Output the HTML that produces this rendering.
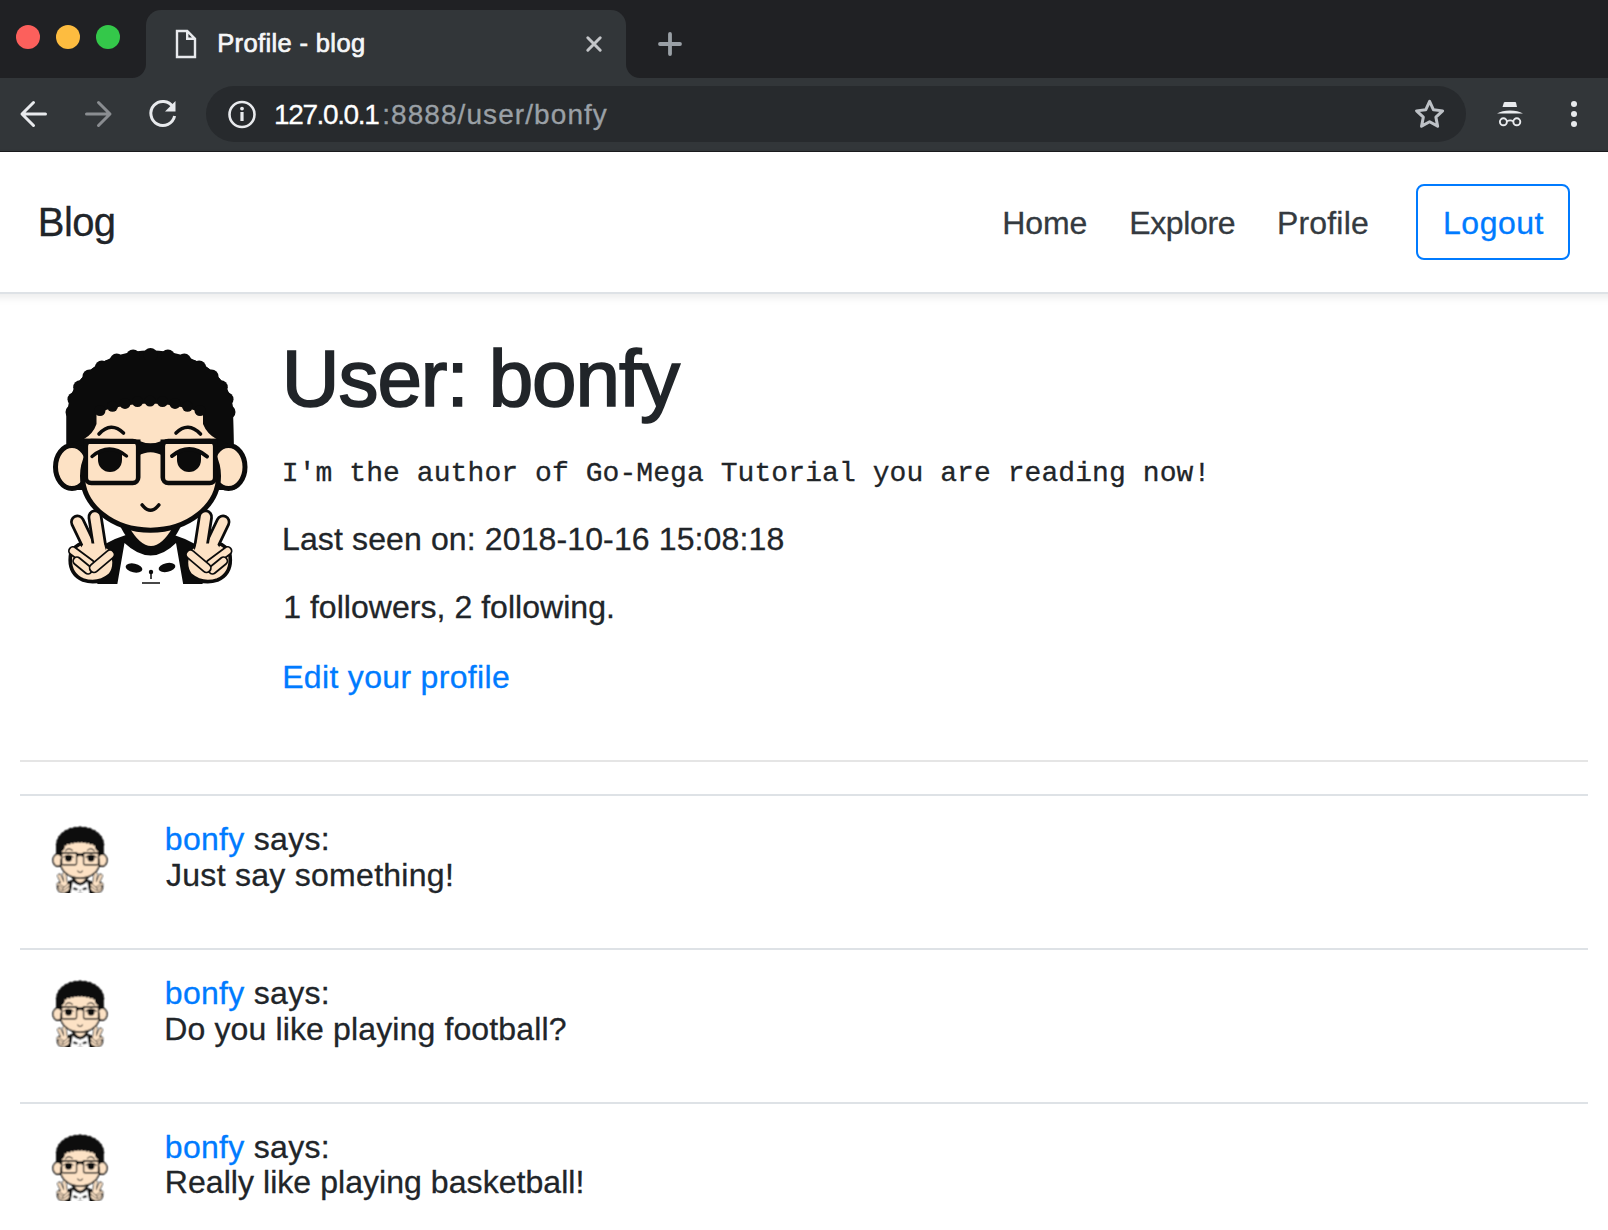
<!DOCTYPE html>
<html><head><meta charset="utf-8"><title>Profile - blog</title>
<style>
html,body{margin:0;padding:0;}
body{width:1608px;height:1230px;overflow:hidden;position:relative;background:#fff;font-family:"Liberation Sans",sans-serif;color:#212529;}
.a{position:absolute;}
.t{position:absolute;white-space:nowrap;line-height:1;-webkit-text-stroke:0.3px currentColor;}
#strip{left:0;top:0;width:1608px;height:78px;background:#202124;}
#toolbar{left:0;top:78px;width:1608px;height:73px;background:#323639;}
#tbline{left:0;top:151px;width:1608px;height:1px;background:#1a1b1d;}
#tab{left:146px;top:10px;width:480px;height:68px;background:#323639;border-radius:15px 15px 0 0;}
.dot{width:24px;height:24px;border-radius:50%;top:25px;}
#omni{left:206px;top:86px;width:1260px;height:56px;background:#272a2d;border-radius:28px;}
#nav{left:-30px;top:152px;width:1668px;height:140px;background:#fff;border-bottom:2px solid #dee2e6;box-shadow:0 4px 8px rgba(0,0,0,.075);}
.hr{left:20px;width:1568px;height:2px;}
</style></head>
<body>
<!-- Chrome -->
<div id="strip" class="a"></div>
<div id="toolbar" class="a"></div>
<div id="tbline" class="a"></div>
<div id="tab" class="a"></div>
<!-- tab flares -->
<svg class="a" style="left:132px;top:64px" width="14" height="14"><path d="M0 14 A14 14 0 0 0 14 0 L14 14 Z" fill="#323639"/></svg>
<svg class="a" style="left:626px;top:64px" width="14" height="14"><path d="M14 14 A14 14 0 0 1 0 0 L0 14 Z" fill="#323639"/></svg>
<div class="a dot" style="left:16px;background:#fc605c;"></div>
<div class="a dot" style="left:56px;background:#fdbc40;"></div>
<div class="a dot" style="left:96px;background:#34c84a;"></div>
<!-- page icon -->
<svg class="a" style="left:174px;top:28px" width="24" height="32"><path d="M3 3 H13.2 L21 10.8 V29 H3 Z M13.2 3 V10.8 H21" fill="none" stroke="#e8eaed" stroke-width="2.4" stroke-linejoin="miter"/></svg>
<div id="tabt" class="t" style="left:217.20px;top:31.00px;font-size:25.5px;color:#f5f6f7;-webkit-text-stroke:0.7px #f5f6f7;letter-spacing:0.369px;">Profile - blog</div>
<svg class="a" style="left:582px;top:32px" width="24" height="24"><path d="M5.8 5.8 L18.2 18.2 M18.2 5.8 L5.8 18.2" stroke="#c4c6c9" stroke-width="3" stroke-linecap="round"/></svg>
<svg class="a" style="left:654px;top:28px" width="32" height="32"><path d="M16 6 V26 M6 16 H26" stroke="#9aa0a6" stroke-width="3.8" stroke-linecap="round"/></svg>
<!-- toolbar icons -->
<svg class="a" style="left:18px;top:98px" width="32" height="32"><path d="M27.5 16 H4.5 M15.5 4.5 L4 16 L15.5 27.5" fill="none" stroke="#e8eaed" stroke-width="3" stroke-linecap="round" stroke-linejoin="round"/></svg>
<svg class="a" style="left:82px;top:98px" width="32" height="32"><path d="M4.5 16 H27.5 M16.5 4.5 L28 16 L16.5 27.5" fill="none" stroke="#8a8d91" stroke-width="3" stroke-linecap="round" stroke-linejoin="round"/></svg>
<svg class="a" style="left:146px;top:97px" width="34" height="34"><path d="M27 10 A12 12 0 1 0 28.6 19" fill="none" stroke="#e8eaed" stroke-width="3"/><path d="M29.5 4 V14.5 H19 Z" fill="#e8eaed"/></svg>
<div id="omni" class="a"></div>
<svg class="a" style="left:226px;top:98px" width="32" height="32"><circle cx="16" cy="16.5" r="12.5" fill="none" stroke="#e8eaed" stroke-width="2.6"/><rect x="14.4" y="14" width="3.2" height="9" fill="#e8eaed"/><circle cx="16" cy="10.6" r="1.9" fill="#e8eaed"/></svg>
<div id="url" class="t" style="left:274.00px;top:100.80px;font-size:28px;color:#fff;letter-spacing:-1.375px;">127.0.0.1</div>
<div id="urlp" class="t" style="left:382.20px;top:100.80px;font-size:28px;color:#9aa0a6;letter-spacing:1.073px;">:8888/user/bonfy</div>
<svg class="a" style="left:1410px;top:95px" width="40" height="40"><path d="M19.60 6.40 L23.48 14.76 L32.63 15.87 L25.88 22.14 L27.65 31.18 L19.60 26.70 L11.55 31.18 L13.32 22.14 L6.57 15.87 L15.72 14.76 Z" fill="none" stroke="#bdc1c6" stroke-width="3" stroke-linejoin="round"/></svg>
<svg class="a" style="left:1490px;top:96px" width="40" height="36">
<path d="M15 6 H25.2 Q25.8 6 26 6.6 L27 11 H12.5 L13.9 6.6 Q14.2 6 15 6 Z" fill="#e8eaed"/>
<path d="M7 17.6 Q12 14.6 20 14.6 Q28 14.6 33 17.6 Z" fill="#e8eaed"/>
<circle cx="13.4" cy="25.8" r="3.5" fill="none" stroke="#e8eaed" stroke-width="1.9"/><circle cx="26.8" cy="25.8" r="3.5" fill="none" stroke="#e8eaed" stroke-width="1.9"/>
<path d="M16.9 25.3 Q20.1 23.6 23.3 25.3" fill="none" stroke="#e8eaed" stroke-width="1.7"/></svg>
<div class="a" style="left:1571px;top:101px;width:6px;height:6px;border-radius:50%;background:#e8eaed"></div>
<div class="a" style="left:1571px;top:111px;width:6px;height:6px;border-radius:50%;background:#e8eaed"></div>
<div class="a" style="left:1571px;top:121px;width:6px;height:6px;border-radius:50%;background:#e8eaed"></div>

<!-- Navbar -->
<div id="nav" class="a"></div>
<div id="brand" class="t" style="left:37.80px;top:201.71px;font-size:40px;color:#212529;letter-spacing:-0.601px;">Blog</div>
<div id="home" class="t" style="left:1002.20px;top:207.00px;font-size:32px;color:#343a40;letter-spacing:-0.066px;">Home</div>
<div id="explore" class="t" style="left:1129.20px;top:207.00px;font-size:32px;color:#343a40;letter-spacing:-0.367px;">Explore</div>
<div id="profile" class="t" style="left:1277.00px;top:206.80px;font-size:32px;color:#343a40;letter-spacing:0.167px;">Profile</div>
<div class="a" style="left:1416px;top:184px;width:150px;height:72px;border:2px solid #007bff;border-radius:8px;"></div>
<div id="logout" class="t" style="left:1443.00px;top:206.71px;font-size:32px;color:#007bff;letter-spacing:0.520px;">Logout</div>

<!-- Profile -->
<svg class="a" style="left:45px;top:340px" width="210" height="244" viewBox="0 0 210 244"><defs><filter id="sblur" x="-5%" y="-5%" width="110%" height="110%"><feConvolveMatrix order="3" kernelMatrix="1 2 1 2 4 2 1 2 1" divisor="16" edgeMode="none"/></filter><g id="av"><path d="M21.5 150 L21.5 72.0 L23.0 72.0 L23.1 68.8 L23.5 65.6 L24.0 62.4 L24.8 59.2 L25.8 56.1 L27.0 53.0 L28.5 50.0 L30.1 47.0 L32.0 44.1 L34.1 41.3 L36.3 38.5 L38.8 35.9 L41.4 33.3 L44.2 30.8 L47.2 28.5 L50.3 26.3 L53.6 24.2 L57.0 22.2 L60.6 20.4 L64.2 18.7 L68.0 17.2 L71.9 15.8 L75.9 14.6 L80.0 13.5 L84.1 12.6 L88.3 11.8 L92.6 11.3 L96.9 10.8 L101.2 10.6 L105.5 10.5 L109.8 10.6 L114.1 10.8 L118.4 11.3 L122.7 11.8 L126.9 12.6 L131.0 13.5 L135.1 14.6 L139.1 15.8 L143.0 17.2 L146.7 18.7 L150.4 20.4 L154.0 22.2 L157.4 24.2 L160.7 26.3 L163.8 28.5 L166.8 30.8 L169.6 33.3 L172.2 35.9 L174.7 38.5 L176.9 41.3 L179.0 44.1 L180.9 47.0 L182.5 50.0 L184.0 53.0 L185.2 56.1 L186.2 59.2 L187.0 62.4 L187.5 65.6 L187.9 68.8 L188.0 72.0 L189.5 150 Z" fill="#0b0b0b"/>
<clipPath id="domeclip"><path d="M21.5 150 L21.5 72.0 L23.0 72.0 L23.1 68.8 L23.5 65.6 L24.0 62.4 L24.8 59.2 L25.8 56.1 L27.0 53.0 L28.5 50.0 L30.1 47.0 L32.0 44.1 L34.1 41.3 L36.3 38.5 L38.8 35.9 L41.4 33.3 L44.2 30.8 L47.2 28.5 L50.3 26.3 L53.6 24.2 L57.0 22.2 L60.6 20.4 L64.2 18.7 L68.0 17.2 L71.9 15.8 L75.9 14.6 L80.0 13.5 L84.1 12.6 L88.3 11.8 L92.6 11.3 L96.9 10.8 L101.2 10.6 L105.5 10.5 L109.8 10.6 L114.1 10.8 L118.4 11.3 L122.7 11.8 L126.9 12.6 L131.0 13.5 L135.1 14.6 L139.1 15.8 L143.0 17.2 L146.7 18.7 L150.4 20.4 L154.0 22.2 L157.4 24.2 L160.7 26.3 L163.8 28.5 L166.8 30.8 L169.6 33.3 L172.2 35.9 L174.7 38.5 L176.9 41.3 L179.0 44.1 L180.9 47.0 L182.5 50.0 L184.0 53.0 L185.2 56.1 L186.2 59.2 L187.0 62.4 L187.5 65.6 L187.9 68.8 L188.0 72.0 L189.5 150 Z"/></clipPath>
<circle cx="27.5" cy="72.0" r="7" fill="#0b0b0b"/>
<circle cx="29.5" cy="59.3" r="7" fill="#0b0b0b"/>
<circle cx="35.2" cy="47.3" r="7" fill="#0b0b0b"/>
<circle cx="44.5" cy="36.5" r="7" fill="#0b0b0b"/>
<circle cx="56.9" cy="27.4" r="7" fill="#0b0b0b"/>
<circle cx="71.7" cy="20.6" r="7" fill="#0b0b0b"/>
<circle cx="88.1" cy="16.4" r="7" fill="#0b0b0b"/>
<circle cx="105.5" cy="15.0" r="7" fill="#0b0b0b"/>
<circle cx="122.9" cy="16.4" r="7" fill="#0b0b0b"/>
<circle cx="139.3" cy="20.6" r="7" fill="#0b0b0b"/>
<circle cx="154.1" cy="27.4" r="7" fill="#0b0b0b"/>
<circle cx="166.5" cy="36.5" r="7" fill="#0b0b0b"/>
<circle cx="175.8" cy="47.3" r="7" fill="#0b0b0b"/>
<circle cx="181.5" cy="59.3" r="7" fill="#0b0b0b"/>
<circle cx="183.5" cy="72.0" r="7" fill="#0b0b0b"/>
<ellipse cx="27" cy="127" rx="16.5" ry="21.5" fill="#fde2c5" stroke="#0b0b0b" stroke-width="5"/>
<ellipse cx="183.5" cy="127" rx="16.5" ry="21.5" fill="#fde2c5" stroke="#0b0b0b" stroke-width="5"/>
<path d="M52 246 L58 205 Q105 178 152 205 L158 246 Z" fill="#0b0b0b"/>
<path d="M72 246 L79.5 203 Q106 228 131 203 L138.5 246 Z" fill="#fff"/>
<path d="M70 176 Q106 254 141 176 Z" fill="#0b0b0b"/>
<path d="M83.5 186 Q106 226 128.5 186 Z" fill="#fde2c5"/>
<ellipse cx="105.5" cy="136" rx="68" ry="54.2" fill="#fde2c5" stroke="#0b0b0b" stroke-width="5"/>
<path d="M20 20 H190 V104 L184 104 L173 99 Q162 94 158 84 L158 73 Q105 54 51.5 73 L51.5 84 Q48 94 37 99 L26 104 H20 Z" fill="#0b0b0b" clip-path="url(#domeclip)"/>
<path d="M51.5 73 Q105 54 158 73 L158 84 Q162 94 171.5 99 L171.5 100 L39 100 L39 99 Q48 94 51.5 84 Z" fill="#fde2c5"/>
<circle cx="55.0" cy="70.5" r="5.5" fill="#0b0b0b"/>
<circle cx="67.5" cy="66.3" r="5.5" fill="#0b0b0b"/>
<circle cx="80.0" cy="63.4" r="5.5" fill="#0b0b0b"/>
<circle cx="92.5" cy="61.6" r="5.5" fill="#0b0b0b"/>
<circle cx="105.0" cy="61.0" r="5.5" fill="#0b0b0b"/>
<circle cx="117.5" cy="61.6" r="5.5" fill="#0b0b0b"/>
<circle cx="130.0" cy="63.4" r="5.5" fill="#0b0b0b"/>
<circle cx="142.5" cy="66.3" r="5.5" fill="#0b0b0b"/>
<circle cx="155.0" cy="70.5" r="5.5" fill="#0b0b0b"/>
<path d="M54 94 Q66 81 78.5 93" fill="none" stroke="#0b0b0b" stroke-width="3.6" stroke-linecap="round"/>
<path d="M131 93 Q143 81 155.5 94" fill="none" stroke="#0b0b0b" stroke-width="3.6" stroke-linecap="round"/>
<rect x="40.8" y="101" width="52.4" height="42" rx="5.5" fill="#fde2c5" stroke="#0b0b0b" stroke-width="4.6"/>
<rect x="117.8" y="101" width="52.4" height="42" rx="5.5" fill="#fde2c5" stroke="#0b0b0b" stroke-width="4.6"/>
<path d="M38.5 98.5 L95.5 99.5 L95.5 104 L38.5 104 Z" fill="#0b0b0b"/>
<path d="M115.5 99.5 L172.5 98.5 L172.5 104 L115.5 104 Z" fill="#0b0b0b"/>
<path d="M93 100.5 Q105.5 106 118 100.5 L118 116 Q105.5 108.5 93 116 Z" fill="#0b0b0b"/>
<path d="M53.0 113 Q65.0 107 77.0 113 L77.0 120 A12 12 0 0 1 53.0 120 Z" fill="#0b0b0b"/>
<path d="M132.0 113 Q144.0 107 156.0 113 L156.0 120 A12 12 0 0 1 132.0 120 Z" fill="#0b0b0b"/>
<path d="M47 116.5 Q64 102 81.5 116" fill="none" stroke="#0b0b0b" stroke-width="3.4" stroke-linecap="round"/>
<path d="M127 116 Q144.5 102 162 116.5" fill="none" stroke="#0b0b0b" stroke-width="4" stroke-linecap="round"/>
<path d="M97.2 165 Q105.5 175.5 113.8 165" fill="none" stroke="#0b0b0b" stroke-width="3.6" stroke-linecap="round"/>
<g >
<path d="M26 212 Q22 233 38 240 Q53 245 65 235 Q72 226 67 211 Q60 202 46 202 Q32 202 26 212 Z" fill="#fde2c5" stroke="#0b0b0b" stroke-width="3.6"/>
<path d="M32.5 182.0 L44.5 207.0" stroke="#0b0b0b" stroke-width="15.0" stroke-linecap="round"/>
<path d="M32.5 182.0 L44.5 207.0" stroke="#fde2c5" stroke-width="9.5" stroke-linecap="round"/>
<path d="M50.0 177.0 L54.5 206.0" stroke="#0b0b0b" stroke-width="15.0" stroke-linecap="round"/>
<path d="M50.0 177.0 L54.5 206.0" stroke="#fde2c5" stroke-width="9.5" stroke-linecap="round"/>
<path d="M39 203.5 L58.8 203.5 L63 217 L29 217 Z" fill="#fde2c5"/>
<path d="M28.0 211.0 L45.5 224.0" stroke="#0b0b0b" stroke-width="10.0" stroke-linecap="round"/>
<path d="M28.0 211.0 L45.5 224.0" stroke="#fde2c5" stroke-width="6.4" stroke-linecap="round"/>
<path d="M32.0 221.0 L43.0 230.0" stroke="#0b0b0b" stroke-width="9.5" stroke-linecap="round"/>
<path d="M32.0 221.0 L43.0 230.0" stroke="#fde2c5" stroke-width="6.0" stroke-linecap="round"/>
<path d="M49.0 228.0 L65.0 214.5" stroke="#0b0b0b" stroke-width="10.5" stroke-linecap="round"/>
<path d="M49.0 228.0 L65.0 214.5" stroke="#fde2c5" stroke-width="7.0" stroke-linecap="round"/>
</g>
<g transform="translate(210.5 0) scale(-1 1)">
<path d="M26 212 Q22 233 38 240 Q53 245 65 235 Q72 226 67 211 Q60 202 46 202 Q32 202 26 212 Z" fill="#fde2c5" stroke="#0b0b0b" stroke-width="3.6"/>
<path d="M32.5 182.0 L44.5 207.0" stroke="#0b0b0b" stroke-width="15.0" stroke-linecap="round"/>
<path d="M32.5 182.0 L44.5 207.0" stroke="#fde2c5" stroke-width="9.5" stroke-linecap="round"/>
<path d="M50.0 177.0 L54.5 206.0" stroke="#0b0b0b" stroke-width="15.0" stroke-linecap="round"/>
<path d="M50.0 177.0 L54.5 206.0" stroke="#fde2c5" stroke-width="9.5" stroke-linecap="round"/>
<path d="M39 203.5 L58.8 203.5 L63 217 L29 217 Z" fill="#fde2c5"/>
<path d="M28.0 211.0 L45.5 224.0" stroke="#0b0b0b" stroke-width="10.0" stroke-linecap="round"/>
<path d="M28.0 211.0 L45.5 224.0" stroke="#fde2c5" stroke-width="6.4" stroke-linecap="round"/>
<path d="M32.0 221.0 L43.0 230.0" stroke="#0b0b0b" stroke-width="9.5" stroke-linecap="round"/>
<path d="M32.0 221.0 L43.0 230.0" stroke="#fde2c5" stroke-width="6.0" stroke-linecap="round"/>
<path d="M49.0 228.0 L65.0 214.5" stroke="#0b0b0b" stroke-width="10.5" stroke-linecap="round"/>
<path d="M49.0 228.0 L65.0 214.5" stroke="#fde2c5" stroke-width="7.0" stroke-linecap="round"/>
</g>
<ellipse cx="89" cy="228" rx="8.5" ry="4.4" transform="rotate(12 89 228)" fill="#0b0b0b"/>
<ellipse cx="122" cy="227.5" rx="8.5" ry="4.4" transform="rotate(-12 122 227.5)" fill="#0b0b0b"/>
<circle cx="106" cy="232" r="2.2" fill="#0b0b0b"/>
<path d="M106 232 V239 M97 243 H115" stroke="#0b0b0b" stroke-width="1.5"/></g></defs><use href="#av"/></svg>
<div id="h1" class="t" style="left:281.80px;top:339.00px;font-size:80px;color:#212529;-webkit-text-stroke:1.7px #212529;letter-spacing:-1.080px;">User: bonfy</div>
<div id="mono" class="t" style="left:281.80px;top:459.71px;font-size:28px;font-family:'Liberation Mono',monospace;color:#212529;letter-spacing:0.079px;">I'm the author of Go-Mega Tutorial you are reading now!</div>
<div id="seen" class="t" style="left:282.00px;top:522.61px;font-size:32px;letter-spacing:0.125px;">Last seen on: 2018-10-16 15:08:18</div>
<div id="foll" class="t" style="left:283.20px;top:590.80px;font-size:32px;letter-spacing:0.035px;">1 followers, 2 following.</div>
<div id="edit" class="t" style="left:282.20px;top:661.00px;font-size:32px;color:#007bff;letter-spacing:0.326px;">Edit your profile</div>

<div class="a hr" style="top:760px;background:#e5e5e5;"></div>
<div class="a hr" style="top:794px;background:#dee2e6;"></div>
<div class="a hr" style="top:948px;background:#dee2e6;"></div>
<div class="a hr" style="top:1102px;background:#dee2e6;"></div>

<!-- posts -->
<svg class="a" style="left:49.7px;top:823.7px" width="59.85" height="69.5" viewBox="0 0 210 244"><use href="#av" filter="url(#sblur)"/></svg>
<svg class="a" style="left:49.7px;top:977.7px" width="59.85" height="69.5" viewBox="0 0 210 244"><use href="#av" filter="url(#sblur)"/></svg>
<svg class="a" style="left:49.7px;top:1131.7px" width="59.85" height="69.5" viewBox="0 0 210 244"><use href="#av" filter="url(#sblur)"/></svg>

<div id="says1" class="t" style="left:164.80px;top:822.80px;font-size:32px;letter-spacing:0.300px;"><span style="color:#007bff">bonfy</span> says:</div>
<div id="p1" class="t" style="left:166.00px;top:858.61px;font-size:32px;letter-spacing:0.278px;">Just say something!</div>
<div id="says2" class="t" style="left:164.80px;top:976.80px;font-size:32px;letter-spacing:0.300px;"><span style="color:#007bff">bonfy</span> says:</div>
<div id="p2" class="t" style="left:164.20px;top:1012.61px;font-size:32px;letter-spacing:0.137px;">Do you like playing football?</div>
<div id="says3" class="t" style="left:164.80px;top:1130.80px;font-size:32px;letter-spacing:0.300px;"><span style="color:#007bff">bonfy</span> says:</div>
<div id="p3" class="t" style="left:164.80px;top:1166.41px;font-size:32px;letter-spacing:0.053px;">Really like playing basketball!</div>
</body></html>
